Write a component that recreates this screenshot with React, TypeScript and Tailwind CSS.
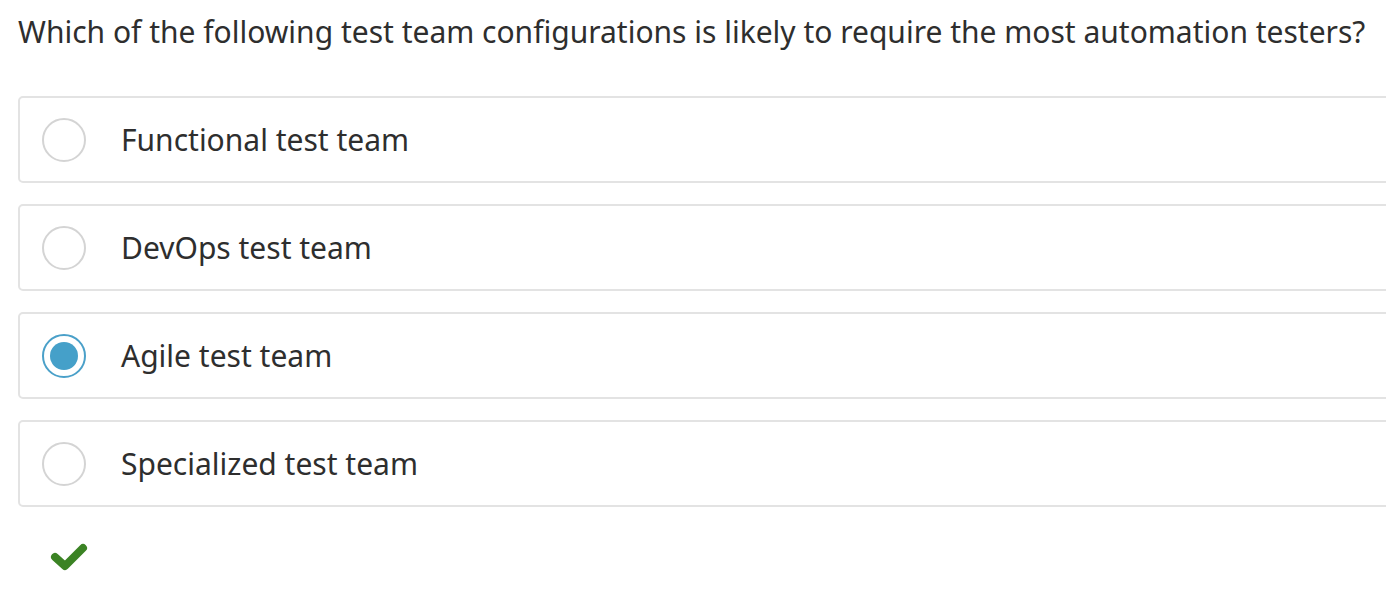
import React from "react";

const options = [
  { id: "functional", label: "Functional test team", selected: false },
  { id: "devops", label: "DevOps test team", selected: false },
  { id: "agile", label: "Agile test team", selected: true },
  { id: "specialized", label: "Specialized test team", selected: false },
];

function Radio({ selected }: { selected: boolean }) {
  if (selected) {
    return (
      <span className="flex h-[44px] w-[44px] shrink-0 items-center justify-center rounded-full border-2 border-[#4aa0c9] bg-white">
        <span className="h-[28px] w-[28px] rounded-full bg-[#45a0c9]" />
      </span>
    );
  }
  return <span className="h-[44px] w-[44px] shrink-0 rounded-full border-2 border-[#d4d4d4] bg-white" />;
}

export default function App() {
  return (
    <div className="min-h-[596px] w-[1386px] overflow-hidden bg-white pl-[18px] pt-[10px] text-[#2e2e2e] font-['Noto_Sans',sans-serif]">
      <h1 className="text-[30px] leading-[44px] font-normal">
        Which of the following test team configurations is likely to require the most automation testers?
      </h1>

      <div className="mt-[42px] flex w-[1390px] flex-col gap-[21px]">
        {options.map((opt) => (
          <div
            key={opt.id}
            className="flex h-[87px] items-center gap-[35px] rounded-[5px] border-2 border-[#e3e3e3] pl-[22px]"
          >
            <Radio selected={opt.selected} />
            <span className="text-[30px] leading-none">{opt.label}</span>
          </div>
        ))}
      </div>

      <div className="mt-[35px] pl-[32px]">
        <svg width="38" height="30" viewBox="0 0 38 30" className="block">
          <path
            d="M5 15 L15 24 L33 6"
            fill="none"
            stroke="#3b8324"
            strokeWidth="8"
            strokeLinecap="round"
            strokeLinejoin="round"
          />
        </svg>
      </div>
    </div>
  );
}
